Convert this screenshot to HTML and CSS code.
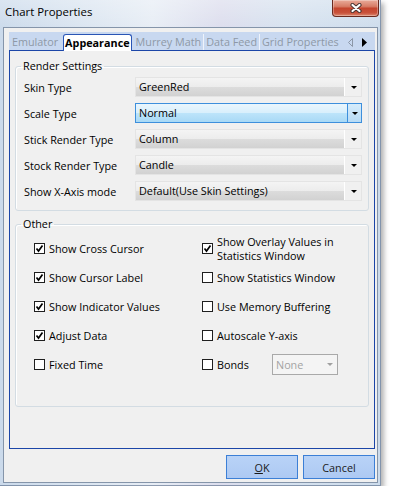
FILE: index.html
```html
<!DOCTYPE html>
<html lang="en">
<head>
  <meta charset="UTF-8" />
  <meta name="viewport" content="width=device-width, initial-scale=1" />
  <title>Chart Properties</title>
  <link rel="stylesheet" href="styles.css">
</head>
<body>
  <div class="window">
    <div class="titlebar">
      <span class="title">Chart Properties</span>
      <button class="close-btn" aria-label="Close">
        <svg width="14" height="10" viewBox="0 0 14 10">
          <path d="M3.5 2 L10.5 8 M10.5 2 L3.5 8" stroke="#4b3633" stroke-width="4.2" stroke-linecap="round" fill="none"/>
          <path d="M3.5 2 L10.5 8 M10.5 2 L3.5 8" stroke="#fff" stroke-width="2.2" stroke-linecap="round" fill="none"/>
        </svg>
      </button>
    </div>

    <div class="client">
      <!-- tab headers -->
      <div class="tabstrip">
        <span class="tab first">Emulator</span>
        <span class="tab selected">Appearance</span>
        <span class="tab sep">Murrey Math</span>
        <span class="tab sep">Data Feed</span>
        <span class="tab">Grid Properties</span>
        <svg class="tab-scroll" width="22" height="9" viewBox="0 0 22 9">
          <polygon points="5.5,0.5 1.5,4.5 5.5,8.5" fill="none" stroke="#8c97a7" stroke-width="1"/>
          <polygon points="15,0 20,4.5 15,9" fill="#000"/>
        </svg>
      </div>

      <div class="tabpage">
        <fieldset class="group render">
          <legend>Render Settings</legend>
          <div class="form-grid">
            <label>Skin Type</label>
            <div class="combo"><span class="combo-face">GreenRed</span><span class="combo-arrow"></span></div>

            <label>Scale Type</label>
            <div class="combo focused"><span class="combo-face">Normal</span><span class="combo-arrow"></span></div>

            <label>Stick Render Type</label>
            <div class="combo"><span class="combo-face">Column</span><span class="combo-arrow"></span></div>

            <label>Stock Render Type</label>
            <div class="combo"><span class="combo-face">Candle</span><span class="combo-arrow"></span></div>

            <label>Show X-Axis mode</label>
            <div class="combo"><span class="combo-face">Default(Use Skin Settings)</span><span class="combo-arrow"></span></div>
          </div>
        </fieldset>

        <fieldset class="group other">
          <legend>Other</legend>
          <div class="check-grid">
            <div class="check"><span class="box checked"></span>Show Cross Cursor</div>
            <div class="check"><span class="box checked"></span><span>Show Overlay Values in<br>Statistics Window</span></div>

            <div class="check"><span class="box checked"></span>Show Cursor Label</div>
            <div class="check"><span class="box"></span>Show Statistics Window</div>

            <div class="check"><span class="box checked"></span>Show Indicator Values</div>
            <div class="check"><span class="box"></span>Use Memory Buffering</div>

            <div class="check"><span class="box checked"></span>Adjust Data</div>
            <div class="check"><span class="box"></span>Autoscale Y-axis</div>

            <div class="check"><span class="box"></span>Fixed Time</div>
            <div class="check">
              <span class="box"></span><span class="bonds-label">Bonds</span>
              <div class="combo-small"><span>None</span><span class="small-arrow"></span></div>
            </div>
          </div>
        </fieldset>
      </div>

      <div class="buttons">
        <button class="btn"><u>O</u>K</button>
        <button class="btn">Cancel</button>
      </div>
    </div>
  </div>
</body>
</html>
```

FILE: styles.css
```css
* {
  box-sizing: border-box;
}

body {
  margin: 0;
  background: #fff;
  font-family: "Open Sans", "Noto Sans", sans-serif;
  font-size: 10.8px;
  color: #000;
}

/* window frame (aero glass look) */
.window {
  width: 381px;
  height: 486px;
  padding: 0 3px 3px;
  display: flex;
  flex-direction: column;
  background:
    linear-gradient(180deg, rgba(255, 255, 255, 0.3), rgba(255, 255, 255, 0) 30px),
    linear-gradient(90deg, #cbdaeb 0%, #d9e4f0 20%, #e7edf5 40%, #dcdded 58%, #d6e2ef 75%, #cddcec 100%);
  box-shadow: inset -1px -1px 0 rgba(70, 90, 120, 0.55), 3px 3px 5px rgba(0, 0, 0, 0.3);
}

.titlebar {
  height: 27px;
  display: flex;
  justify-content: space-between;
  align-items: flex-start;
  padding-left: 2px;
}
.title {
  padding-top: 4px;
  line-height: 15px;
  font-size: 11.4px;
  color: #000;
}
.close-btn {
  width: 47px;
  height: 17px;
  margin-right: -1px;
  padding: 0;
  display: flex;
  align-items: center;
  justify-content: center;
  border: 1px solid #6a2a1f;
  border-top: none;
  border-radius: 0 0 4px 4px;
  background: linear-gradient(180deg, #e9ab9a 0%, #d77d67 40%, #c4452e 52%, #c9523b 80%, #dd8a70 100%);
  box-shadow: inset 0 0 0 1px rgba(255, 255, 255, 0.3);
}

.client {
  flex: 1;
  background: #f0f0f0;
  border: 1px solid #8595aa;
  padding: 4px 2px 3px 5px;
  display: flex;
  flex-direction: column;
}

/* tabs */
.tabstrip {
  height: 18px;
  background: #c8d8f0;
  display: flex;
  align-items: flex-end;
}
.tab {
  height: 16px;
  line-height: 15px;
  padding: 0 2px;
  color: #8e98a6;
  white-space: nowrap;
}
.tab.first {
  padding: 0 4px 0 3px;
}
.tab.sep {
  border-right: 1px solid #eef3fb;
}
.tab.selected {
  position: relative;
  z-index: 1;
  height: 17px;
  margin: 0 2px -1px 1px;
  background: #fff;
  border: 1px solid #2a55b5;
  border-bottom: none;
  border-radius: 3px 3px 0 0;
  color: #000;
  font-weight: bold;
  padding: 0 1px;
}
.tab-scroll {
  margin-left: auto;
  margin-right: 6px;
  margin-bottom: 3px;
}

.tabpage {
  height: 399px;
  border: 1px solid #1c46a8;
  background: #f0f0f0;
  padding: 0 5px;
}

/* group boxes */
.group {
  margin: 8px 0 0;
  min-width: 0;
  border: 1px solid #d3dce3;
  border-radius: 3px;
  box-shadow: inset 1px 1px 0 #fff;
}
.group legend {
  line-height: 14px;
  padding: 0 2px;
}
.group.render {
  padding: 4px 6px 9px 8px;
}
.group.render legend {
  margin-left: -3px;
}
.group.other {
  margin-top: 6px;
  padding: 3px 0 27px 18px;
}
.group.other legend {
  margin-left: -13px;
}

.form-grid {
  display: grid;
  grid-template-columns: 111px 1fr;
  row-gap: 6px;
  align-items: center;
}

/* combo boxes */
.combo {
  height: 20px;
  display: flex;
  border: 1px solid #fbfbfb;
  outline: 1px solid #e4e4e4;
  outline-offset: -1px;
}
.combo-face {
  flex: 1;
  padding-left: 3px;
  line-height: 18px;
  background: linear-gradient(180deg, #f4f4f4 0%, #ececec 50%, #dcdcdc 51%, #d2d2d2 100%);
  border-right: 1px solid #fff;
}
.combo-arrow {
  width: 16px;
  background: #f0f0f0;
  display: flex;
  align-items: center;
  justify-content: center;
}
.combo-arrow::after {
  content: "";
  margin-left: 1px;
  border-left: 3px solid transparent;
  border-right: 3px solid transparent;
  border-top: 3px solid #000;
}
.combo.focused {
  border-color: #3d8fdc;
  outline: none;
}
.combo.focused .combo-face {
  background: linear-gradient(180deg, #eaf6fd 0%, #d8effc 50%, #bde4fa 51%, #a8d9f6 100%);
  border-right: 1px solid #3d8fdc;
}
.combo.focused .combo-arrow {
  width: 13px;
  background: linear-gradient(180deg, #d6ecfb, #b7dbf5);
}

/* check boxes */
.check-grid {
  display: grid;
  grid-template-columns: 168px 1fr;
  grid-auto-rows: 29px;
  align-items: center;
}
.check {
  display: flex;
  align-items: center;
  gap: 4px;
  line-height: 14px;
}
.box {
  flex: none;
  width: 11px;
  height: 11px;
  border: 1px solid #1f1f1f;
  background: #fff;
}
.box.checked {
  background: #fff url("data:image/svg+xml;utf8,<svg xmlns='http://www.w3.org/2000/svg' width='9' height='9'><path d='M1.5 4.5 L3.5 7 L7.5 1.5' stroke='black' stroke-width='1.7' fill='none'/></svg>") center / 9px 9px no-repeat;
}
.bonds-label {
  width: 51px;
}
.combo-small {
  width: 66px;
  height: 21px;
  border: 1px solid #a9a9a9;
  background: #f4f4f4;
  display: flex;
  align-items: center;
  justify-content: space-between;
  padding: 0 4px 0 3px;
  color: #a3a3a3;
}
.small-arrow {
  border-left: 3px solid transparent;
  border-right: 3px solid transparent;
  border-top: 3px solid #a0a0a0;
}

/* dialog buttons */
.buttons {
  margin-top: 6px;
  display: flex;
  justify-content: flex-end;
  gap: 5px;
}
.btn {
  width: 72px;
  height: 24px;
  padding: 0;
  font-family: inherit;
  font-size: inherit;
  color: #1a1a1a;
  background: linear-gradient(180deg, #b9d3f7, #adc9f3);
  border: 1px solid #3c7fd6;
}
```
